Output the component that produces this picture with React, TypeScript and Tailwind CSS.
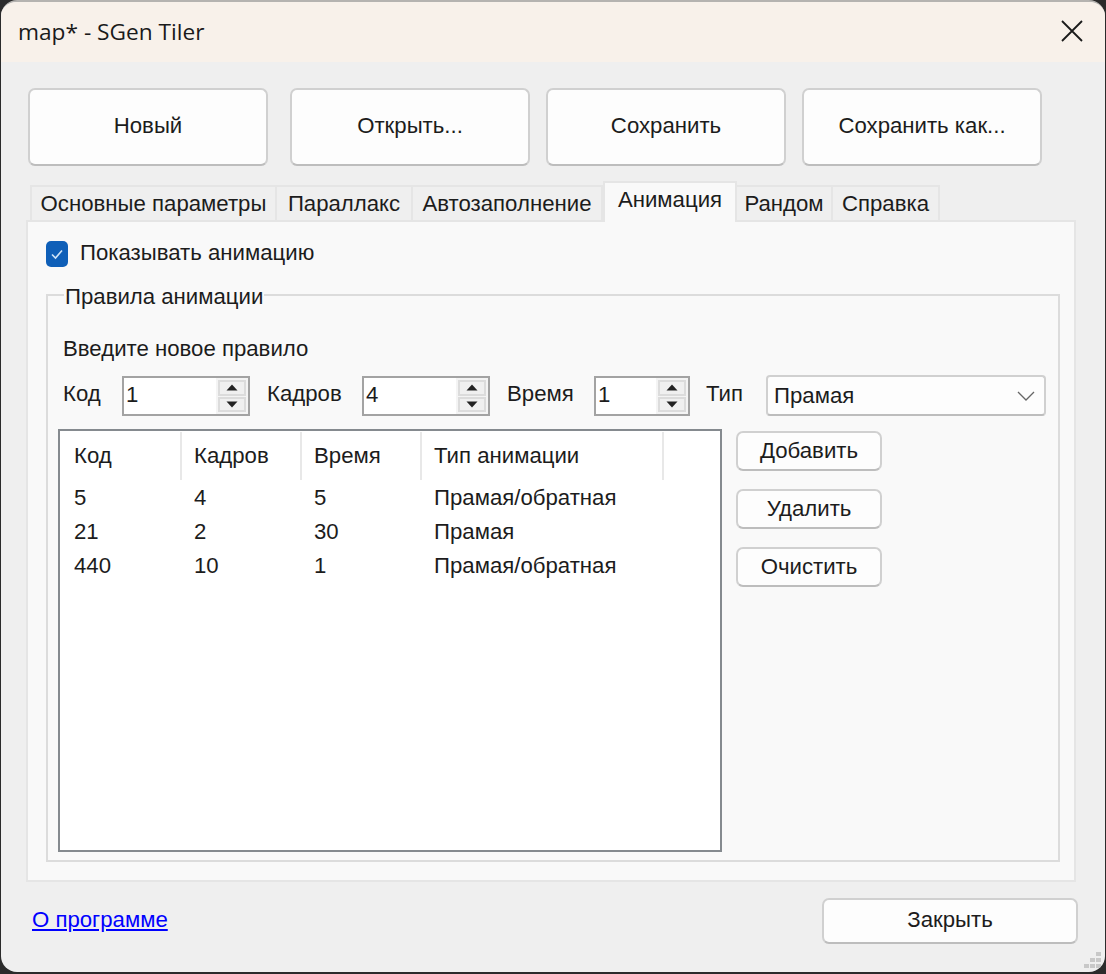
import React from 'react'

const UI_FONT = "font-['Liberation_Sans',Arial,sans-serif]"

const tabs = [
  { label: 'Основные параметры', w: 'w-[247px]' },
  { label: 'Параллакс', w: 'w-[136px]' },
  { label: 'Автозаполнение', w: 'w-[190px]' },
  { label: 'Анимация', w: 'w-[134px]', active: true },
  { label: 'Рандом', w: 'w-[96px]' },
  { label: 'Справка', w: 'w-[107px]' },
]

const rows = [
  ['5', '4', '5', 'Прамая/обратная'],
  ['21', '2', '30', 'Прамая'],
  ['440', '10', '1', 'Прамая/обратная'],
]

const ActionButton: React.FC<{ label: string; className: string }> = ({ label, className }) => (
  <button className={`flex items-center justify-center bg-[#fdfdfd] border-2 border-[#d0d0d0] border-b-[#bdbdbd] rounded-[7px] text-[#1c1c1c] ${className}`}>
    {label}
  </button>
)

const Spin: React.FC<{ value: string; w: string }> = ({ value, w }) => (
  <div className={`flex h-10 bg-white border-2 border-[#a3a3a3] ${w}`}>
    <span className="flex-1 pl-[2px] leading-[34px]">{value}</span>
    <div className="flex flex-col w-[32px] h-[36px] bg-[#f4f4f4] px-[2px] py-[2px] gap-[1px]">
      <div className="flex-1 flex items-center justify-center bg-[#f0f0f0] border-2 border-[#dcdcdc]">
        <svg width="12" height="7" viewBox="0 0 12 7"><path d="M6 0.5 L11.5 6.5 H0.5 Z" fill="#222" /></svg>
      </div>
      <div className="flex-1 flex items-center justify-center bg-[#f0f0f0] border-2 border-[#dcdcdc]">
        <svg width="12" height="7" viewBox="0 0 12 7"><path d="M0.5 0.5 H11.5 L6 6.5 Z" fill="#222" /></svg>
      </div>
    </div>
  </div>
)

export default function App() {
  return (
    <div className={`w-[1106px] h-[974px] bg-[#2b2b2b] ${UI_FONT} text-[22.2px] text-[#1c1c1c]`}>
      <div className="relative w-[1104px] h-[972px] ml-[1px] flex flex-col bg-[#efefef] rounded-[16px] overflow-hidden border-t-2 border-[#b5b3b0]">
        {/* title bar */}
        <div className="flex items-center justify-between h-[60px] shrink-0 bg-[#f8f1ea] pl-[17px] pr-[22px]">
          <span className="font-['Open_Sans',sans-serif] text-[22.7px] text-[#1a1a1a]">map* - SGen Tiler</span>
          <svg width="22" height="22" viewBox="0 0 22 22" className="-mt-[3px]">
            <path d="M1 1 L21 21 M21 1 L1 21" stroke="#1a1a1a" strokeWidth="1.8" fill="none" />
          </svg>
        </div>

        {/* toolbar */}
        <div className="flex pl-[27px] pt-[26px] shrink-0">
          <ActionButton label="Новый" className="w-[240px] h-[78px] pb-[2px] mr-[22px]" />
          <ActionButton label="Открыть..." className="w-[240px] h-[78px] pb-[2px] mr-[16px]" />
          <ActionButton label="Сохранить" className="w-[240px] h-[78px] pb-[2px] mr-[16px]" />
          <ActionButton label="Сохранить как..." className="w-[240px] h-[78px] pb-[2px]" />
        </div>

        {/* tabs */}
        <div className="flex items-end pl-[29px] mt-[14px] h-[40px] shrink-0 relative z-10">
          {tabs.map((t) => (
            <div
              key={t.label}
              className={
                t.active
                  ? `${t.w} h-[41px] -mb-[2px] bg-[#f9f9f9] border-2 border-b-0 border-[#e5e5e5] flex justify-center leading-[33px]`
                  : `${t.w} h-[35px] bg-[#efefef] border-2 border-b-0 border-[#e5e5e5] border-l-0 first:border-l-2 flex justify-center leading-[33px]`
              }
            >
              {t.label}
            </div>
          ))}
        </div>

        {/* tab page */}
        <div className="w-[1050px] h-[662px] ml-[25px] bg-[#f9f9f9] border-2 border-[#e5e5e5] shrink-0 px-[18px] pt-[18px]">
          <div className="flex items-center h-[27px]">
            <div className="flex items-center justify-center w-[22px] h-[26px] rounded-[5px] bg-[#0f5fb8]">
              <svg width="14" height="12" viewBox="0 0 14 12"><path d="M2 6.5 L5.5 10 L12 2.5" stroke="#cfe3f7" strokeWidth="1.6" fill="none" /></svg>
            </div>
            <span className="ml-[12px] -mt-[2px]">Показывать анимацию</span>
          </div>

          {/* group box */}
          <div className="relative mt-[27px] w-[1014px] h-[568px] border-2 border-[#dcdcdc] pl-[15px] pr-[12px] pt-[40px]">
            <span className="absolute left-[16px] -top-[12px] px-[1px] bg-[#f9f9f9] leading-[26px]">Правила анимации</span>
            <div className="leading-[26px]">Введите новое правило</div>

            <div className="flex items-start mt-[14px]">
              <span className="w-[59px] leading-[36px]">Код</span>
              <Spin value="1" w="w-[128px]" />
              <span className="w-[112px] pl-[17px] leading-[36px]">Кадров</span>
              <Spin value="4" w="w-[128px]" />
              <span className="w-[104px] pl-[17px] leading-[36px]">Время</span>
              <Spin value="1" w="w-[96px]" />
              <span className="w-[76px] pl-[16px] leading-[36px]">Тип</span>
              <div className="flex items-center justify-between w-[280px] h-[41px] -mt-[1px] bg-[#fdfdfd] border-2 border-[#d0d0d0] border-b-[#bdbdbd] rounded-[4px] pl-[6px] pr-[9px]">
                <span className="mt-[1px]">Прамая</span>
                <svg width="18" height="10" viewBox="0 0 18 10"><path d="M1 1 L9 9 L17 1" stroke="#666" strokeWidth="1.3" fill="none" /></svg>
              </div>
            </div>

            <div className="flex mt-[13px]">
              {/* list view */}
              <div className="w-[664px] h-[423px] -ml-[5px] bg-white border-2 border-[#858a8f] shrink-0">
                <div className="grid grid-cols-[122px_120px_120px_242px] h-[48px] mt-[1px]">
                  {['Код', 'Кадров', 'Время', 'Тип анимации'].map((h, i) => (
                    <div key={h} className={`border-r-2 border-[#e8e8e8] leading-[48px] h-[48px] ${i === 0 ? 'pl-[14px]' : 'pl-[12px]'}`}>{h}</div>
                  ))}
                </div>
                <div className="pt-[1px]">
                  {rows.map((r) => (
                    <div key={r[0]} className="grid grid-cols-[120px_120px_120px_242px] h-[34px]">
                      {r.map((c, i) => (
                        <div key={i} className="pl-[14px] leading-[34px]">{c}</div>
                      ))}
                    </div>
                  ))}
                </div>
              </div>
              <div className="flex flex-col gap-[18px] ml-[14px] mt-[2px]">
                <ActionButton label="Добавить" className="w-[146px] h-[40px]" />
                <ActionButton label="Удалить" className="w-[146px] h-[40px]" />
                <ActionButton label="Очистить" className="w-[146px] h-[40px]" />
              </div>
            </div>
          </div>
        </div>

        {/* footer */}
        <div className="flex items-start justify-between pl-[31px] pr-[27px] pt-[16px]">
          <a href="#" className="text-[#0000ff] underline mt-[9px] leading-[26px]">О программе</a>
          <ActionButton label="Закрыть" className="w-[256px] h-[46px] pb-[2px]" />
        </div>

        {/* size grip */}
        <svg width="17" height="16" viewBox="0 0 17 16" className="absolute right-[4px] bottom-[4px]">
          <path d="M12 0h5v4h-5zM6 6h5v4H6zM12 6h5v4h-5zM0 12h5v4H0zM6 12h5v4H6zM12 12h5v4h-5z" fill="#c8c8c8" />
        </svg>
      </div>
    </div>
  )
}
